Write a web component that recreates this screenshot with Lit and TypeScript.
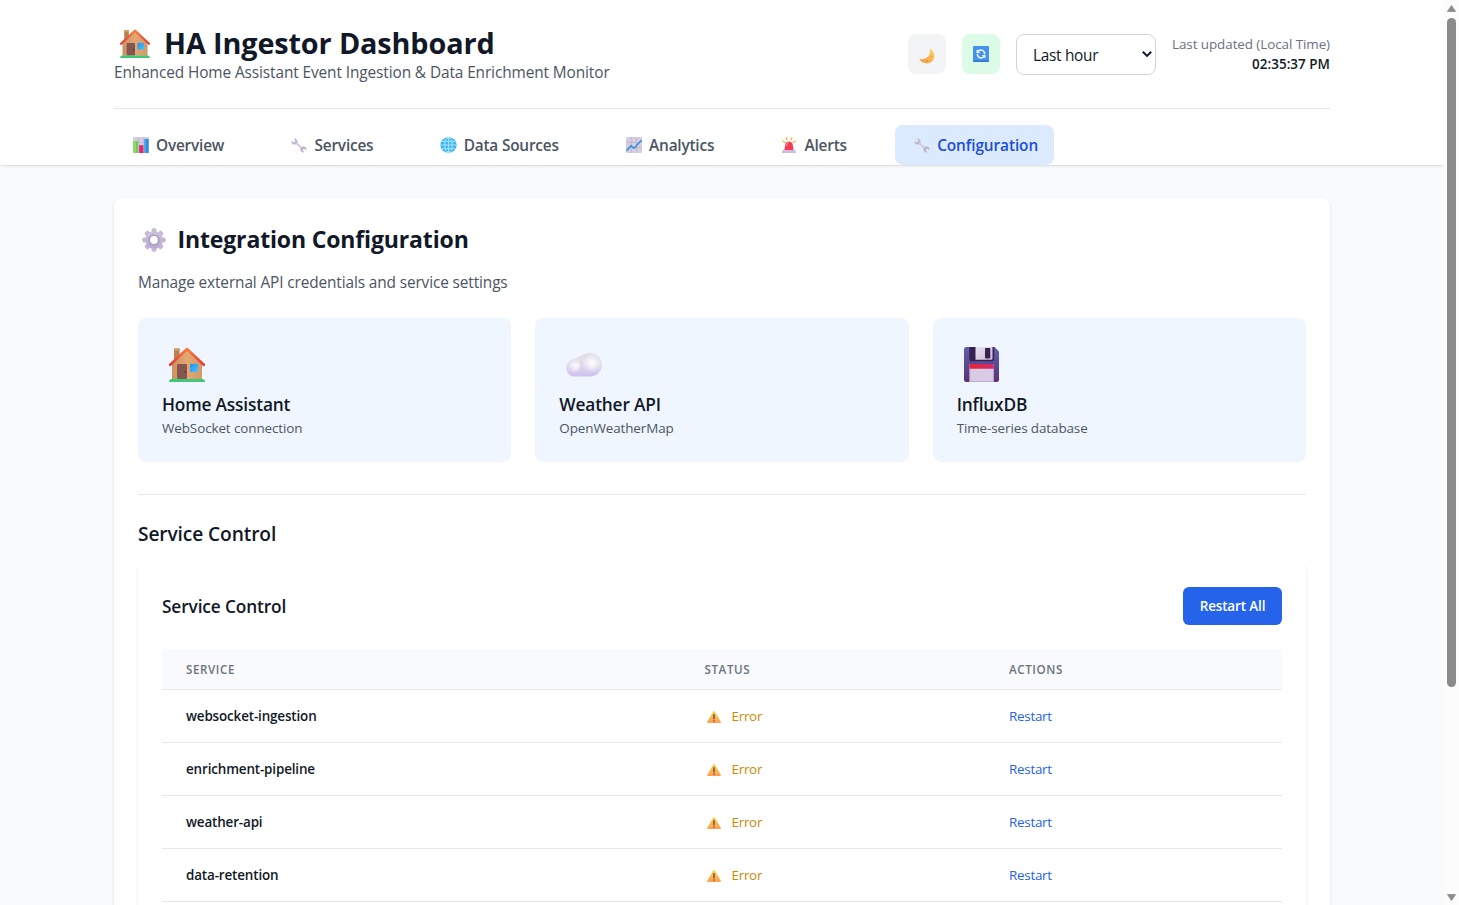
import { LitElement, html, css, svg } from "lit";
import { customElement, property } from "lit/decorators.js";
import { classMap } from "lit/directives/class-map.js";

const house = svg`
  <defs>
    <linearGradient id="wall" x1="0" y1="0" x2="1" y2="0"><stop offset="0" stop-color="#c9925c"/><stop offset=".5" stop-color="#e3a773"/><stop offset="1" stop-color="#d09a68"/></linearGradient>
    <linearGradient id="roof" x1="0" y1="0" x2="0" y2="1"><stop offset="0" stop-color="#ff7a3c"/><stop offset="1" stop-color="#e0393b"/></linearGradient>
    <linearGradient id="pane" x1="0" y1="0" x2="1" y2="1"><stop offset="0" stop-color="#2590e8"/><stop offset="1" stop-color="#4cc3ff"/></linearGradient>
  </defs>
  <path d="M5 1.5h5.6V14H5z" fill="#b98350"/>
  <path d="M5 1.5h5.6v2H5z" fill="#d09a5f"/>
  <path d="M3 16 18 2.5 33 16v15.5H3z" fill="url(#wall)"/>
  <path d="M1.2 17.3 18 1.9l16.800 15.400" fill="none" stroke="url(#roof)" stroke-width="2.600" stroke-linejoin="round" stroke-linecap="round"/>
  <rect x="8" y="16.4" width="10" height="14.6" rx="1" fill="#85564f"/>
  <rect x="15.6" y="23" width="1.2" height="2" fill="#5d3a38"/>
  <rect x="21" y="16.4" width="8" height="7.8" fill="url(#pane)"/>
  <path d="M2 31h32q2 .6 2 3H0q0-2.4 2-3z" fill="#3fc878"/>`;

const wrench = svg`
  <path d="M8.500 8 23.500 22" stroke="#cfc3dc" stroke-width="3.800"/>
  <path d="M1.300 5.300Q.2 9.600 3 11.800t7 .9L13 9.800Q14 5.500 11.300 3 8.800.4 5.200 1.300l3.200 3.300-.7 2.800-3 .9z" fill="#c3b6d2"/>
  <path d="M30.700 24.700q1.100-4.300-1.700-6.500t-7-.9L19 20.200q-1 4.300 1.700 6.800 2.500 2.600 6.100 1.700l-3.200-3.300.7-2.800 3-.9z" fill="#bcafcc"/>
  <path d="M10 8.600 22.500 20.300" stroke="#e6ddee" stroke-width="1.300"/>`;

const icons: Record<string, { box: string; art: unknown }> = {
  house: { box: "0 0 36 34", art: house },
  wrench: { box: "0 0 32 30", art: wrench },
  bars: {
    box: "0 0 16 16",
    art: svg`<rect width="16" height="16" rx="1.2" fill="#d3ccdf"/>
      <path d="M0 5.300h16M0 10.600h16M5.500 0v16M10.700 0v16" stroke="#b9afc8" stroke-width=".6"/>
      <path d="M0 4h4.800v12H1.200Q0 16 0 14.800z" fill="#86dc62"/><path d="M3 4h1.800v12H3z" fill="#6bc75b"/>
      <path d="M6.100 8.200h4.300V16H6.100z" fill="#e3286c"/>
      <path d="M11.200 2H15.600v14h-4.400z" fill="#2f8de0"/><path d="M11.200 2h1.500v14h-1.500z" fill="#58b1f0"/>`,
  },
  globe: {
    box: "0 0 17 17",
    art: svg`<circle cx="8.500" cy="8.500" r="8.200" fill="#3fb8f2"/>
      <g fill="none" stroke="#b8ecff" stroke-width=".85"><ellipse cx="8.500" cy="8.500" rx="3.700" ry="8"/><path d="M8.500.4v16.200M.4 8.500h16.200M1.800 4.600h13.400M1.800 12.400h13.400"/></g>`,
  },
  trend: {
    box: "0 0 16 16",
    art: svg`<rect width="16" height="16" rx="1.200" fill="#d6cde0"/>
      <path d="M0 5.300h16M0 10.600h16M5.300 0v16M10.600 0v16" stroke="#b7aac8" stroke-width=".6"/>
      <path d="M.3 14 5 8.800l3 2.400L15.700 3" fill="none" stroke="#2f8fdf" stroke-width="1.500"/>`,
  },
  siren: {
    box: "0 0 14 16",
    art: svg`<path d="M.8 3.900l2.400 1.600M4.100.6l1 2.400M13.200 3.900l-2.400 1.600M9.900.6l-1 2.400" stroke="#f9b13e" stroke-width="1.200" stroke-linecap="round"/>
      <path d="M2.300 13.500 3.400 7q.6-2.500 3.600-2.500T10.600 7l1.100 6.500z" fill="#f33b56"/><path d="M4.600 9.500 5.200 7q.4-1.200 1.500-1.200" fill="none" stroke="#ff8fa0" stroke-width="1"/>
      <path d="M.8 13h12.400q.8 1 .8 3H0q0-2 .8-3z" fill="#cdbce0"/>`,
  },
  moon: {
    box: "0 0 16 16",
    art: svg`<defs><linearGradient id="mg" x1="1" y1="0" x2="0" y2="1"><stop offset="0" stop-color="#ffd566"/><stop offset="1" stop-color="#eb983f"/></linearGradient></defs>
      <path d="M10.600.4Q15.600 3 15.500 8.300 14.800 15 8 15.500 2.500 15.500.3 10.600 4 12.300 7.800 9.600 12.200 6 10.600.4z" fill="url(#mg)"/>
      <circle cx="12.300" cy="8.500" r=".9" fill="#e9a04a"/><circle cx="8.300" cy="12.800" r=".8" fill="#d98736"/>`,
  },
  sync: {
    box: "0 0 16 16",
    art: svg`<rect width="16" height="16" rx="1.200" fill="#4393ea"/><path d="M0 14.500h16v.3q0 1.200-1.200 1.200H1.200Q0 16 0 14.800z" fill="#3477cf"/>
      <path d="M4.300 6.200Q5.800 3.900 8.500 4.100q2.200.2 3 2.600v1.500M11.700 9.800Q10.200 12.100 7.500 11.900q-2.200-.2-3-2.600V7.800" fill="none" stroke="#f4f6fc" stroke-width="1.500"/>
      <path d="M3.500 3.400v3.600h3.800zM12.500 12.600V9H8.700z" fill="#f4f6fc"/>`,
  },
  gear: {
    box: "-12 -12 24 24",
    art: svg`<defs><linearGradient id="gg" x1="0" y1="0" x2="0" y2="1"><stop offset="0" stop-color="#cdc2da"/><stop offset="1" stop-color="#bba8d2"/></linearGradient></defs>
      ${[0, 45, 90, 135].map((a) => svg`<rect x="-2.500" y="-11.700" width="5" height="23.400" rx="1.700" fill="#c6b9d8" transform="rotate(${a})"/>`)}
      <circle r="8.700" fill="url(#gg)"/><circle r="5.600" fill="#a99db8"/><circle r="3.900" fill="#fff"/>`,
  },
  cloud: {
    box: "0 0 36 24",
    art: svg`<defs>
        <linearGradient id="cb" x1="0" y1="0" x2="0" y2="1"><stop offset="0" stop-color="#e2dee6"/><stop offset=".5" stop-color="#e3deee"/><stop offset="1" stop-color="#cdbff0"/></linearGradient>
        <radialGradient id="c1"><stop offset="0" stop-color="#fff" stop-opacity=".95"/><stop offset="1" stop-color="#fff" stop-opacity="0"/></radialGradient></defs>
      <path d="M8.800 23.500A8.700 8.700 0 0 1 8.800 6.100Q10.500 3 14 3.600 17.500 0 24.300 0A11.700 11.700 0 0 1 24.300 23.500z" fill="url(#cb)"/>
      <path d="M15.500 8.500Q14 12.500 16 17" fill="none" stroke="#cfc7d8" stroke-width="1.600" opacity=".6"/>
      <circle cx="26" cy="10" r="9.500" fill="url(#c1)"/><circle cx="9.300" cy="13" r="7" fill="url(#c1)"/>`,
  },
  floppy: {
    box: "0 0 35 35",
    art: svg`<defs>
        <linearGradient id="fb" x1="0" y1="0" x2="0" y2="1"><stop offset="0" stop-color="#5f5fae"/><stop offset="1" stop-color="#5b3174"/></linearGradient>
        <linearGradient id="fr" x1="0" y1="0" x2="1" y2="0"><stop offset="0" stop-color="#ea2432"/><stop offset="1" stop-color="#c92d72"/></linearGradient>
        <linearGradient id="fs" x1="0" y1="0" x2="1" y2="1"><stop offset="0" stop-color="#e9e1f0"/><stop offset="1" stop-color="#c8bcd3"/></linearGradient></defs>
      <path d="M2.500 0H30.500L35 4.500v28q0 2.500-2.500 2.500h-30Q0 35 0 32.500v-30Q0 0 2.500 0z" fill="url(#fb)"/>
      <path d="M5.300 0h24.900v12.500q0 1.700-1.700 1.700H7q-1.700 0-1.700-1.700z" fill="#352252"/>
      <path d="M11.500 0h17v11.500q0 1.200-1.200 1.200H11.500z" fill="url(#fs)"/>
      <rect x="21" y="1" width="5.300" height="10.400" rx=".8" fill="#3c1f51"/>
      <path d="M5.500 18q0-1 1-1h22.300q1 0 1 1v17H5.500z" fill="#d9cbe5"/>
      <path d="M5.500 18q0-1 1-1h22.300q1 0 1 1v3.700H5.500z" fill="url(#fr)"/>
      <path d="M5.900 21.700V34.600H29.400V21.700" fill="none" stroke="#b7a4ce" stroke-width=".8"/>`,
  },
  warning: {
    box: "0 0 14 12",
    art: svg`<defs><linearGradient id="wg" x1="0" y1="0" x2="0" y2="1"><stop offset="0" stop-color="#ffd24d"/><stop offset="1" stop-color="#fd9f50"/></linearGradient></defs>
      <path d="M6.200.5q.8-1 1.600 0l6 10.300Q14.200 12 13 12H1Q-.2 12 .2 10.800z" fill="url(#wg)"/>
      <path d="M6.200 3.300h1.500v4.900H6.200zM6.300 9.300h1.300v1.400H6.300z" fill="#66504c"/>`,
  },
};

@customElement("ui-icon")
class UiIcon extends LitElement {
  @property() name = "";
  static styles = css`
    :host { display: block; flex: none; }
    svg { display: block; width: 100%; height: 100%; }
  `;
  render() {
    const icon = icons[this.name];
    return html`<svg viewBox=${icon.box} preserveAspectRatio="none" aria-hidden="true">${icon.art}</svg>`;
  }
}

const tabs = [
  { id: "overview", icon: "bars", label: "Overview" },
  { id: "services", icon: "wrench", label: "Services" },
  { id: "sources", icon: "globe", label: "Data Sources" },
  { id: "analytics", icon: "trend", label: "Analytics" },
  { id: "alerts", icon: "siren", label: "Alerts" },
  { id: "configuration", icon: "wrench", label: "Configuration" },
];

const integrations = [
  { icon: "house", title: "Home Assistant", note: "WebSocket connection" },
  { icon: "cloud", title: "Weather API", note: "OpenWeatherMap" },
  { icon: "floppy", title: "InfluxDB", note: "Time-series database" },
];

const services = ["websocket-ingestion", "enrichment-pipeline", "weather-api", "data-retention"];

@customElement("app-root")
class AppRoot extends LitElement {
  static styles = css`
    :host {
      display: grid; grid-template-columns: 1fr 15px; height: 905px; overflow: hidden;
      background: #f9fafb; color: #111827;
      font-family: "Open Sans", "Noto Sans", sans-serif; font-size: 15.4px; line-height: 24px; letter-spacing: -0.1px;
    }
    * { box-sizing: border-box; }
    h1, h2, h3, h4, p { margin: 0; }
    button { font: inherit; letter-spacing: inherit; border: 0; color: inherit; }
    .page { height: 905px; overflow: hidden; }
    .wrap { width: 1216px; margin: 0 auto; }
    .header { height: 165px; background: #fff; box-shadow: 0 1px 3px rgba(0,0,0,.1), 0 1px 2px -1px rgba(0,0,0,.1); }
    .top { display: flex; justify-content: space-between; height: 109px; padding-top: 24px; border-bottom: 1px solid #e5e7eb; }
    .brand { display: flex; gap: 14px; height: 37px; padding: 1px 0 0 6px; }
    .brand ui-icon { width: 30px; height: 29px; margin-top: 4px; }
    h1 { font-size: 28.8px; line-height: 36px; font-weight: 700; letter-spacing: -0.12px; }
    .sub { color: #4b5563; }
    .tools { display: flex; gap: 16px; padding-top: 10px; }
    .square { display: grid; place-content: center; width: 38px; height: 40px; padding: 0; border-radius: 8px; background: #f3f4f6; }
    .square.live { background: #dcfce7; }
    .square ui-icon { width: 16px; height: 16px; }
    .moon { margin-top: 3px; }
    .select { display: flex; justify-content: space-between; align-items: center; width: 140px; height: 41px; padding: 3px 2px 0 16px; border: 1px solid #d1d5db; border-radius: 8px; letter-spacing: -0.3px; }
    .select svg { width: 12px; height: 8px; margin-bottom: 4px; }
    .stamp { text-align: right; font-size: 13.44px; line-height: 20px; letter-spacing: -0.08px; color: #6b7280; }
    .stamp .time { font-weight: 580; color: #111827; letter-spacing: 0.03px; }
    .tabs { display: flex; gap: 32.3px; padding-top: 16px; }
    .tab { display: flex; height: 40px; padding: 9px 16px 0 0; border-radius: 8px; background: none; font-weight: 560; letter-spacing: -0.2px; line-height: 24px; color: #4b5563; }
    .tab .slot { display: flex; justify-content: center; width: 42px; padding: 3px 0 0 11px; }
    .tab ui-icon { width: 16px; height: 16px; }
    .tab ui-icon.wrench { width: 16px; height: 15px; margin-top: 0.5px; }
    .tab ui-icon.siren { width: 14px; }
    .tab ui-icon.globe { width: 17px; }
    .tab.configuration { letter-spacing: -0.1px; }
    .tab.active { background: #dbeafe; color: #1d4ed8; }
    .panel { margin-top: 33px; height: 760px; padding: 24px; background: #fff; border-radius: 8px; box-shadow: 0 1px 3px rgba(0,0,0,.1), 0 1px 2px -1px rgba(0,0,0,.1); }
    .heading { display: flex; gap: 11.5px; padding: 0 0 0 4px; height: 49px; }
    .heading ui-icon { width: 24px; height: 24px; margin-top: 5.5px; }
    h2 { font-size: 23.04px; line-height: 34px; font-weight: 700; letter-spacing: -0.16px; }
    .lead { height: 47px; color: #4b5563; letter-spacing: -0.12px; }
    .cards { display: grid; grid-template-columns: repeat(3, 1fr); gap: 24px; }
    .card { height: 144px; padding: 24px; border-radius: 8px; background: #eff6ff; }
    .art { height: 49px; padding: 5px 0 0 7px; }
    .art ui-icon { width: 36px; height: 35px; }
    .art ui-icon.cloud { position: relative; height: 24px; top: 6px; }
    .art ui-icon.floppy { width: 35px; }
    .card h3 { font-size: 17.3px; line-height: 27px; font-weight: 560; letter-spacing: -0.17px; }
    .card p { font-size: 13.44px; line-height: 20px; letter-spacing: -0.1px; color: #4b5563; }
    .control { margin-top: 32px; padding-top: 25px; border-top: 1px solid #e5e7eb; }
    .control > h3 { height: 43px; font-size: 19.2px; line-height: 28px; font-weight: 560; letter-spacing: -0.13px; }
    .inner { height: 400px; padding: 24px; background: #fff; border-radius: 8px; box-shadow: 0 1px 3px rgba(0,0,0,.1), 0 1px 2px -1px rgba(0,0,0,.1); }
    .bar { display: flex; justify-content: space-between; align-items: center; height: 38px; margin-bottom: 24px; }
    h4 { padding-top: 2px; font-size: 17.3px; font-weight: 560; letter-spacing: -0.13px; }
    .primary { width: 99px; height: 38px; padding: 0; border-radius: 6px; background: #2563eb; color: #fff; font-size: 13.44px; font-weight: 600; letter-spacing: -0.12px; }
    .row { display: grid; grid-template-columns: 518.5px 304.500px 1fr; align-items: center; height: 53px; padding-left: 24px; border-bottom: 1px solid #e5e7eb; font-size: 13.44px; letter-spacing: -0.28px; }
    .row.head { height: 41px; padding-top: 2px; background: #f9fafb; font-size: 11.6px; font-weight: 540; letter-spacing: 0.6px; color: #6b7280; }
    .name { font-weight: 560; letter-spacing: -0.15px; }
    .state { display: flex; gap: 10.500px; padding-left: 2.500px; color: #ca8a04; }
    .state ui-icon { width: 14px; height: 12px; margin-top: 7px; }
    .action { color: #2563eb; }
    .scroll { display: flex; flex-direction: column; align-items: center; justify-content: space-between; height: 905px; padding: 5px 0 4px; background: #fcfcfc; }
    .scroll svg { display: block; width: 9px; height: 7px; }
    .thumb { width: 9px; height: 669px; margin: 6px 0 auto; border-radius: 5px; background: #8b8b8b; }
  `;

  render() {
    return html`
      <div class="page">
        <header class="header">
          <div class="wrap">
            <div class="top">
              <div>
                <div class="brand"><ui-icon name="house"></ui-icon><h1>HA Ingestor Dashboard</h1></div>
                <p class="sub">Enhanced Home Assistant Event Ingestion &amp; Data Enrichment Monitor</p>
              </div>
              <div class="tools">
                <button class="square"><ui-icon class="moon" name="moon"></ui-icon></button>
                <button class="square live"><ui-icon name="sync"></ui-icon></button>
                <div class="select">
                  <span>Last hour</span>
                  <svg viewBox="0 0 12 8"><path d="M1.800 1.800 6 5.900l4.200-4.100" fill="none" stroke="#111827" stroke-width="2"/></svg>
                </div>
                <div class="stamp"><div>Last updated (Local Time)</div><div class="time">02:35:37 PM</div></div>
              </div>
            </div>
            <nav class="tabs">
              ${tabs.map((t) => html`
                <button class=${classMap({ tab: true, [t.id]: true, active: t.id === "configuration" })}>
                  <span class="slot"><ui-icon class=${t.icon} name=${t.icon}></ui-icon></span><span>${t.label}</span>
                </button>`)}
            </nav>
          </div>
        </header>
        <main class="wrap panel">
          <div class="heading"><ui-icon name="gear"></ui-icon><h2>Integration Configuration</h2></div>
          <p class="lead">Manage external API credentials and service settings</p>
          <div class="cards">
            ${integrations.map((i) => html`
              <div class="card">
                <div class="art"><ui-icon class=${i.icon} name=${i.icon}></ui-icon></div>
                <h3>${i.title}</h3>
                <p>${i.note}</p>
              </div>`)}
          </div>
          <section class="control">
            <h3>Service Control</h3>
            <div class="inner">
              <div class="bar"><h4>Service Control</h4><button class="primary">Restart All</button></div>
              <div class="row head"><span>SERVICE</span><span>STATUS</span><span>ACTIONS</span></div>
              ${services.map((s) => html`
                <div class="row">
                  <span class="name">${s}</span>
                  <span class="state"><ui-icon name="warning"></ui-icon><span>Error</span></span>
                  <span class="action">Restart</span>
                </div>`)}
            </div>
          </section>
        </main>
      </div>
      <div class="scroll">
        <svg viewBox="0 0 9 7"><path d="M4.500.5 8.600 6.500H.4z" fill="#8b8b8b" stroke="#8b8b8b" stroke-linejoin="round" stroke-width=".8"/></svg>
        <div class="thumb"></div>
        <svg viewBox="0 0 9 7"><path d="M4.500 6.500.4.500h8.200z" fill="#8b8b8b" stroke="#8b8b8b" stroke-linejoin="round" stroke-width=".8"/></svg>
      </div>`;
  }
}
